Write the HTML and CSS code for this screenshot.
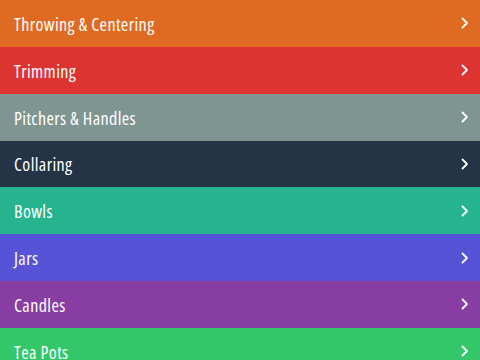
FILE: index.html
```html
<!DOCTYPE html>
<html>
<head>
<meta charset="utf-8">
<link rel="stylesheet" href="styles.css">
</head>
<body>
<ul class="list">
  <li class="row orange"><span class="label">Throwing &amp; Centering</span><svg class="chev" viewBox="0 0 8 12"><path d="M1.5 1.5 L6 6 L1.5 10.5"/></svg></li>
  <li class="row red"><span class="label">Trimming</span><svg class="chev" viewBox="0 0 8 12"><path d="M1.5 1.5 L6 6 L1.5 10.5"/></svg></li>
  <li class="row gray"><span class="label">Pitchers &amp; Handles</span><svg class="chev" viewBox="0 0 8 12"><path d="M1.5 1.5 L6 6 L1.5 10.5"/></svg></li>
  <li class="row navy"><span class="label">Collaring</span><svg class="chev" viewBox="0 0 8 12"><path d="M1.5 1.5 L6 6 L1.5 10.5"/></svg></li>
  <li class="row teal"><span class="label">Bowls</span><svg class="chev" viewBox="0 0 8 12"><path d="M1.5 1.5 L6 6 L1.5 10.5"/></svg></li>
  <li class="row blue"><span class="label">Jars</span><svg class="chev" viewBox="0 0 8 12"><path d="M1.5 1.5 L6 6 L1.5 10.5"/></svg></li>
  <li class="row purple"><span class="label">Candles</span><svg class="chev" viewBox="0 0 8 12"><path d="M1.5 1.5 L6 6 L1.5 10.5"/></svg></li>
  <li class="row green"><span class="label">Tea Pots</span><svg class="chev" viewBox="0 0 8 12"><path d="M1.5 1.5 L6 6 L1.5 10.5"/></svg></li>
</ul>
</body>
</html>
```

FILE: styles.css
```css
html, body {
  margin: 0;
  padding: 0;
  width: 480px;
  height: 360px;
  overflow: hidden;
  background: #ffffff;
}
.list {
  list-style: none;
  margin: 0;
  padding: 0;
  display: flex;
  flex-direction: column;
}
.row {
  height: 46.85px;
  flex: none;
  display: flex;
  align-items: center;
  justify-content: space-between;
  padding: 0 11px 0 14px;
  box-sizing: border-box;
  color: #ffffff;
}
.label {
  font-family: "Open Sans", "Liberation Sans", sans-serif;
  font-stretch: condensed;
  font-size: 18px;
  font-weight: 400;
  line-height: 20px;
  letter-spacing: 0.4px;
  padding-top: 1px;
}
.chev {
  width: 8px;
  height: 12px;
  fill: none;
  stroke: #ffffff;
  stroke-width: 1.8;
  stroke-linecap: round;
  stroke-linejoin: round;
}
.orange { background: #df6a21; }
.red { background: #de3431; }
.gray { background: #7f9592; }
.navy { background: #243446; }
.teal { background: #26b48f; }
.blue { background: #5653d7; }
.purple { background: #873da1; }
.green { background: #33c76a; }
```
